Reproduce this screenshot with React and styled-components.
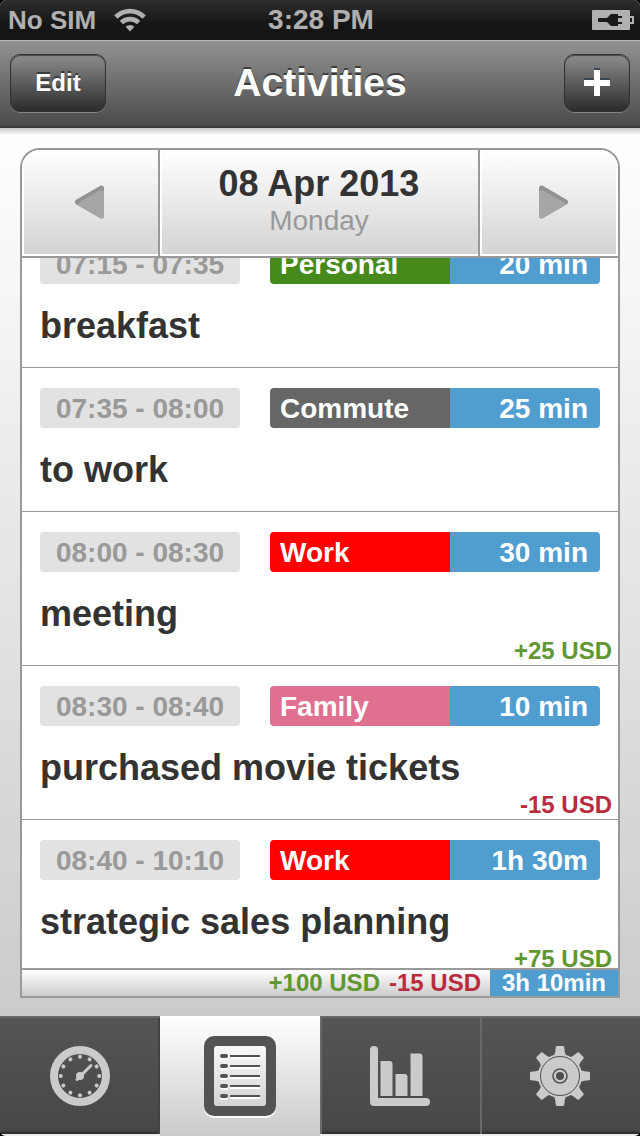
import React, { useLayoutEffect, useRef, useState } from 'react'
import styled, { createGlobalStyle } from 'styled-components'

const GlobalStyle = createGlobalStyle`
  * {
    box-sizing: border-box;
  }
  body {
    margin: 0;
    background: #000;
    font-family: "Liberation Sans", Arial, Helvetica, sans-serif;
  }
  button {
    font-family: inherit;
    border: none;
    padding: 0;
    margin: 0;
    cursor: pointer;
  }
`

const Screen = styled.div`
  display: flex;
  flex-direction: column;
  height: 100vh;
  border-radius: 6px;
  overflow: hidden;
  background: #cbcbcb;
`

const StatusBar = styled.div`
  display: grid;
  grid-template-columns: 1fr auto 1fr;
  align-items: center;
  height: 40px;
  padding: 0 6px 0 8px;
  background: linear-gradient(#2e2e2e, #161616 60%, #141414);
  color: #b0b0b0;
  font-size: 26px;
  font-weight: 700;
`
const Carrier = styled.div`
  display: flex;
  align-items: center;
  gap: 18px;
`
const Clock = styled.span`
  font-size: 28px;
`
const BatteryWrap = styled.div`
  display: flex;
  justify-content: flex-end;
`

const NavBar = styled.header`
  display: flex;
  align-items: center;
  justify-content: space-between;
  height: 88px;
  padding: 0 10px 1px;
  background: linear-gradient(#929292, #4a4a4a);
  border-top: 1px solid #b8b8b8;
  border-bottom: 2px solid #393939;
`
const NavSide = styled.div`
  display: flex;
  flex: 1;
  justify-content: ${props => props.$end ? 'flex-end' : 'flex-start'};
`
const NavTitle = styled.h1`
  margin: 0;
  color: #fff;
  font-size: 39px;
  font-weight: 700;
  text-shadow: 0 -2px 0 #3c3c3c;
`
const NavButton = styled.button`
  display: flex;
  align-items: center;
  justify-content: center;
  width: ${props => props.$small ? '66px' : '96px'};
  height: 58px;
  border: 1px solid #333;
  border-radius: 10px;
  background: linear-gradient(#8d8d8d, #2c2c2c);
  box-shadow: 0 1px 0 #838383, inset 0 1px 1px #444;
  color: #fff;
  font-size: 24px;
  font-weight: 700;
  text-shadow: 0 -2px 0 #3a3a3a;
`

const Content = styled.main`
  display: flex;
  flex: 1;
  min-height: 0;
  padding: 20px 20px 18px;
  background: linear-gradient(#c8c8c8, #fff0 7px), linear-gradient(#fff, #cbcbcb);
`
const Panel = styled.section`
  display: flex;
  flex-direction: column;
  flex: 1;
  min-width: 0;
  border: 2px solid #999;
  border-radius: 20px 20px 0 0;
  background: #fff;
  overflow: hidden;
`

const DayHeader = styled.div`
  display: grid;
  grid-template-columns: 138px 1fr 138px;
  flex: none;
  height: 108px;
  border-bottom: 2px solid #999;
`
const DayButton = styled.button`
  display: flex;
  align-items: center;
  justify-content: center;
  padding-left: ${props => props.$last ? '8px' : '0'};
  background: linear-gradient(#fff, #d3d3d3);
  border-right: ${props => props.$last ? 'none' : '2px solid #999'};
  box-shadow: inset 2px -2px 0 #fff${props => props.$last ? ', inset -2px 0 0 #fff' : ''};
`
const DayLabel = styled.div`
  display: flex;
  flex-direction: column;
  align-items: center;
  padding-top: 14px;
  background: linear-gradient(#fff, #d3d3d3);
  border-right: 2px solid #999;
  box-shadow: inset 2px -2px 0 #fff;
`
const DayDate = styled.h2`
  margin: 0;
  color: #333;
  font-size: 36px;
  line-height: 40px;
`
const DayName = styled.span`
  color: #999;
  font-size: 28px;
  line-height: 34px;
`

const List = styled.ul`
  flex: 1;
  min-height: 0;
  margin: 0;
  padding: 0;
  list-style: none;
  overflow-y: auto;
  scrollbar-width: none;
`
const Row = styled.li`
  display: flex;
  flex-direction: column;
  padding-top: 20px;
  padding-bottom: ${props => props.$paid ? '0' : '19px'};
  border-bottom: 1px solid #999;
`
const RowTop = styled.div`
  display: flex;
  gap: 30px;
  height: 40px;
  padding: 0 18px;
  font-size: 28px;
  font-weight: 700;
  line-height: 42px;
`
const TimeRange = styled.div`
  width: 200px;
  border-radius: 4px;
  background: #e2e2e2;
  color: #999;
  text-align: center;
`
const Tags = styled.div`
  display: grid;
  grid-template-columns: 6fr 5fr;
  flex: 1;
  border-radius: 4px;
  overflow: hidden;
  color: #fff;
`
const Category = styled.div`
  padding-left: 10px;
  background: ${props => props.$color};
`
const Duration = styled.div`
  padding-right: 12px;
  background: #509dd0;
  text-align: right;
`
const RowName = styled.h3`
  margin: 20px 18px 0;
  color: #333;
  font-size: 36px;
  line-height: 44px;
`
const Amount = styled.span`
  color: ${props => props.$value < 0 ? '#bb2b3f' : '#619732'};
  font-size: 24px;
  font-weight: 700;
`
const RowAmount = styled(Amount)`
  padding-right: 6px;
  line-height: 29px;
  text-align: right;
`

const Summary = styled.footer`
  display: flex;
  justify-content: flex-end;
  gap: 9px;
  flex: none;
  height: 28px;
  border-top: 2px solid #999;
  background: linear-gradient(#fff, #cbcbcb);
  line-height: 26px;
`
const Total = styled.div`
  width: 128px;
  background: #509dd0;
  color: #fff;
  font-size: 24px;
  font-weight: 700;
  text-align: center;
`

const TabBar = styled.nav`
  display: grid;
  grid-template-columns: repeat(4, 1fr);
  flex: none;
  height: 120px;
`
const Tab = styled.a`
  display: flex;
  justify-content: center;
  padding-top: ${props => props.$active ? '20px' : '28px'};
  border-top: ${props => props.$active ? 'none' : '2px solid #696969'};
  border-bottom: ${props => props.$active ? 'none' : '2px solid #eee'};
  background: ${props => props.$active
    ? 'linear-gradient(#fff, #cacaca)'
    : 'linear-gradient(#fff0 112px, #2a2a2a), linear-gradient(#555, #474747)'};
  box-shadow: ${props => props.$active
    ? 'none'
    : `inset ${props.$lit ? '2px 0 0 #696969' : '-2px 0 0 #424242'}`};
`

const WifiIcon = () => (
  <svg width="32" height="24" viewBox="0 0 32 24" fill="none" stroke="#b0b0b0" strokeWidth="4.800" aria-hidden="true">
    <path d="M1.800 9a20 20 0 0 1 28.400 0" />
    <path d="M7.400 14.700a12.200 12.200 0 0 1 17.200 0" strokeWidth="4.600" />
    <path d="M16 23.500l-4.400-4.800a6.400 6.400 0 0 1 8.800 0z" fill="#b0b0b0" stroke="none" />
  </svg>
)

const BatteryIcon = () => (
  <svg width="42" height="20" viewBox="0 0 42 20" aria-hidden="true">
    <rect width="38" height="20" rx="1" fill="#b0b0b0" />
    <path d="M38 7h3v6h-3" fill="none" stroke="#b0b0b0" strokeWidth="2" />
    <path d="M7 8h7q2 0 3-2t3-2h6v2h4v2h-4v4h4v2h-4v2h-6q-2 0-3-2t-3-2H7q-1 0-1-1V9q0-1 1-1z" fill="#191919" />
  </svg>
)

const PlusIcon = () => (
  <svg width="26" height="30" viewBox="0 0 26 30" aria-hidden="true">
    <path d="M10 0h6v10h10v6H16v10h-6V16H0v-6h10z" fill="#3a4654" />
    <path d="M10 2h6v10h10v6H16v10h-6V18H0v-6h10z" fill="#fff" />
  </svg>
)

const ArrowIcon = ({ flip }) => (
  <svg width="32" height="36" viewBox="0 0 32 36" aria-hidden="true">
    <g transform={flip ? 'translate(32 0) scale(-1 1)' : undefined} strokeLinejoin="round" strokeWidth="5">
      <path d="M27.500 4v28.200L3 19z" fill="#e8e8e8" stroke="#e8e8e8" />
      <path d="M27.500 3v28L3.500 17z" fill="#929292" stroke="#929292" />
      <path d="M27.500 7.500V31L7 19z" fill="#a6a6a6" stroke="#a6a6a6" />
    </g>
  </svg>
)

const GaugeIcon = () => (
  <svg width="60" height="60" viewBox="0 0 60 60" fill="#cbcbcb" aria-hidden="true">
    <circle cx="30" cy="30" r="26" fill="none" stroke="#cbcbcb" strokeWidth="8" />
    {[...Array(12).keys()].map(n => (
      <circle key={n} cx="30" cy="10.800" r="2" transform={`rotate(${n * 30} 30 30)`} />
    ))}
    <path d="M27 33.500L41 19.500" stroke="#cbcbcb" strokeWidth="3" strokeLinecap="round" />
    <circle cx="30" cy="30" r="4" />
  </svg>
)

const ListIcon = () => (
  <svg width="72" height="82" viewBox="0 0 72 82" aria-hidden="true">
    <defs>
      <linearGradient id="sheet" x1="0" y1="0" x2="0" y2="1">
        <stop offset="0" stopColor="#f8f8f8" />
        <stop offset="1" stopColor="#d4d4d4" />
      </linearGradient>
    </defs>
    <rect y="2" width="72" height="80" rx="10" fill="#fff" />
    <rect width="72" height="80" rx="10" fill="#535353" />
    <rect x="10" y="10" width="52" height="60" rx="3" fill="url(#sheet)" />
    {[20, 30, 40, 50, 60].map(y => (
      <g key={y}>
        <rect x="16" y={y} width="8" height="4" rx="2" fill="#fff" />
        <rect x="26" y={y + 1} width="30" height="2" fill="#fff" />
        <rect x="16" y={y - 2} width="8" height="4" rx="2" fill="#535353" />
        <rect x="26" y={y - 1} width="30" height="2" fill="#535353" />
      </g>
    ))}
  </svg>
)

const ChartIcon = () => (
  <svg width="60" height="60" viewBox="0 0 60 60" fill="#cbcbcb" aria-hidden="true">
    <path d="M0 4a4 4 0 0 1 8 0v48h48a4 4 0 0 1 0 8H4a4 4 0 0 1-4-4z" />
    <path d="M10.500 15h9q3 0 3 3v32h-12z" />
    <path d="M25.500 28h9q3 0 3 3v19h-12z" />
    <path d="M40.500 7.500h9q3 0 3 3V50h-12z" />
  </svg>
)

const GearIcon = () => (
  <svg width="60" height="60" viewBox="0 0 60 60" fill="#cbcbcb" aria-hidden="true">
    {[0, 45, 90, 135, 180, 225, 270, 315].map(deg => (
      <path key={deg} d="M23 10.500q2-2 2.300-5l.5-4.500q.1-1 1-1h6.400q.9 0 1 1l.5 4.500q.3 3 2.300 5z" transform={`rotate(${deg} 30 30)`} />
    ))}
    <circle cx="30" cy="30" r="22" />
    <circle cx="30" cy="30" r="19.500" fill="none" stroke="#4e4e4e" strokeWidth="1" />
    <circle cx="30" cy="30" r="7" fill="none" stroke="#4e4e4e" strokeWidth="1.500" />
    <circle cx="30" cy="30" r="4" fill="#4e4e4e" />
  </svg>
)

const activities = [
  { time: '07:15 - 07:35', category: 'Personal', color: '#458a1b', duration: '20 min', name: 'breakfast' },
  { time: '07:35 - 08:00', category: 'Commute', color: '#666', duration: '25 min', name: 'to work' },
  { time: '08:00 - 08:30', category: 'Work', color: '#f00', duration: '30 min', name: 'meeting', amount: 25 },
  { time: '08:30 - 08:40', category: 'Family', color: '#e07090', duration: '10 min', name: 'purchased movie tickets', amount: -15 },
  { time: '08:40 - 10:10', category: 'Work', color: '#f00', duration: '1h 30m', name: 'strategic sales planning', amount: 75 },
]

const tabs = [
  { id: 'timer', label: 'Timer', icon: <GaugeIcon /> },
  { id: 'activities', label: 'Activities', icon: <ListIcon /> },
  { id: 'reports', label: 'Reports', icon: <ChartIcon /> },
  { id: 'settings', label: 'Settings', icon: <GearIcon /> },
]

const usd = (value) => `${value > 0 ? '+' : ''}${value} USD`

const App = () => {
  const [tab, setTab] = useState('activities')
  const list = useRef(null)

  // open the day a little past its first entry
  useLayoutEffect(() => {
    list.current.scrollTop = 34
  }, [])

  return (
    <>
      <GlobalStyle />
      <Screen>
        <StatusBar>
          <Carrier>No SIM <WifiIcon /></Carrier>
          <Clock>3:28 PM</Clock>
          <BatteryWrap><BatteryIcon /></BatteryWrap>
        </StatusBar>

        <NavBar>
          <NavSide><NavButton>Edit</NavButton></NavSide>
          <NavTitle>Activities</NavTitle>
          <NavSide $end><NavButton $small aria-label="Add activity"><PlusIcon /></NavButton></NavSide>
        </NavBar>

        <Content>
          <Panel>
            <DayHeader>
              <DayButton aria-label="Previous day"><ArrowIcon /></DayButton>
              <DayLabel>
                <DayDate>08 Apr 2013</DayDate>
                <DayName>Monday</DayName>
              </DayLabel>
              <DayButton $last aria-label="Next day"><ArrowIcon flip /></DayButton>
            </DayHeader>

            <List ref={list}>
              {activities.map(item => (
                <Row key={item.time} $paid={!!item.amount}>
                  <RowTop>
                    <TimeRange>{item.time}</TimeRange>
                    <Tags>
                      <Category $color={item.color}>{item.category}</Category>
                      <Duration>{item.duration}</Duration>
                    </Tags>
                  </RowTop>
                  <RowName>{item.name}</RowName>
                  {item.amount && <RowAmount $value={item.amount}>{usd(item.amount)}</RowAmount>}
                </Row>
              ))}
            </List>

            <Summary>
              <Amount $value={100}>{usd(100)}</Amount>
              <Amount $value={-15}>{usd(-15)}</Amount>
              <Total>3h 10min</Total>
            </Summary>
          </Panel>
        </Content>

        <TabBar>
          {tabs.map((item, i) => (
            <Tab
              key={item.id}
              href={`#${item.id}`}
              aria-label={item.label}
              $active={tab === item.id}
              $lit={i > 1}
              onClick={() => setTab(item.id)}
            >
              {item.icon}
            </Tab>
          ))}
        </TabBar>
      </Screen>
    </>
  )
}

export default App
